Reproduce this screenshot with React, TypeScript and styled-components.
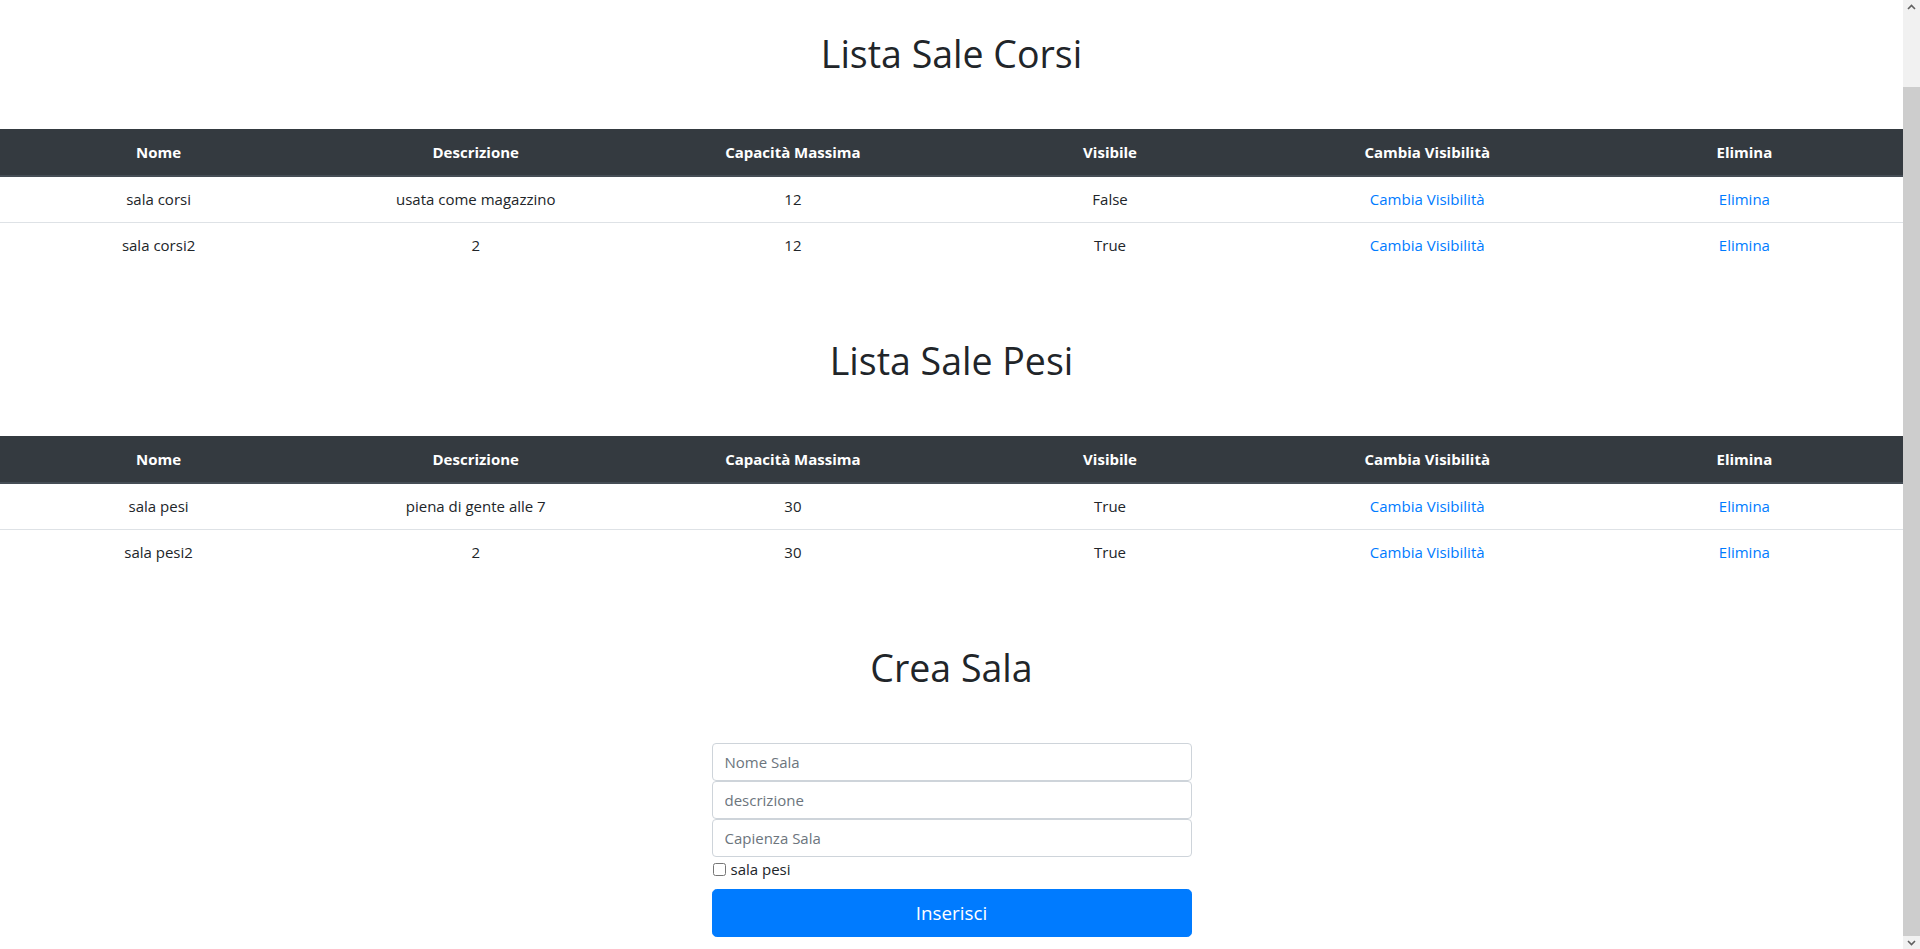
import React from "react";
import styled, { createGlobalStyle } from "styled-components";

const Global = createGlobalStyle`
  *, *::before, *::after { box-sizing: border-box; }
  html, body { margin: 0; padding: 0; background: #fff; overflow: hidden; }
  body {
    font-family: "Open Sans", "Noto Sans", sans-serif;
    font-size: 15px;
    line-height: 24px;
    color: #212529;
  }
`;

const Frame = styled.div`
  display: flex;
  height: 100vh;
  overflow: hidden;
`;

const Content = styled.main`
  flex: 1;
  min-width: 0;
  padding: 29.5px 0 12px;
`;

const Scrollbar = styled.div`
  flex: none;
  width: 17px;
  height: 100%;
  display: flex;
  flex-direction: column;
  background: #f1f1f1;
`;

const ScrollButton = styled.div<{ $h: number }>`
  flex: none;
  height: ${(p) => p.$h}px;
  display: flex;
  align-items: center;
  justify-content: center;
`;

const Track = styled.div`
  flex: 1;
  display: flex;
  flex-direction: column;
  padding-top: 73px;
`;

const Thumb = styled.div`
  flex: 1;
  background: #cdcdcd;
`;

const Section = styled.section`
  & + & {
    margin-top: 68.5px;
  }
`;

const Title = styled.h1`
  margin: 0 0 51.5px;
  font-family: "Open Sans", "Noto Sans", sans-serif;
  font-weight: 400;
  font-size: 37.5px;
  line-height: 48px;
  text-align: center;
  color: #212529;
`;

const Table = styled.table`
  width: 100%;
  table-layout: fixed;
  border-collapse: separate;
  border-spacing: 0;
  color: #212529;
`;

const HeadCell = styled.th`
  background: #343a40;
  color: #fff;
  font-weight: 700;
  font-size: 15px;
  line-height: 24px;
  padding: 11px 12px;
  border-bottom: 2px solid #454d55;
  text-align: center;
  vertical-align: middle;
`;

const Row = styled.tr`
  & + & > td {
    border-top: 1px solid #dee2e6;
  }
`;

const Cell = styled.td`
  padding: 10px 12px 11px;
  line-height: 24px;
  font-size: 15px;
  text-align: center;
  vertical-align: middle;
`;

const Link = styled.a`
  color: #007bff;
  text-decoration: none;
  cursor: pointer;
`;

const Form = styled.form`
  width: 480px;
  margin: 0 auto;
  display: flex;
  flex-direction: column;
`;

const Input = styled.input`
  display: block;
  width: 100%;
  height: 38px;
  margin: 0;
  padding: 6px 12px;
  border: 1px solid #ced4da;
  border-radius: 4px;
  background: #fff;
  font-family: "Open Sans", "Noto Sans", sans-serif;
  font-size: 15px;
  line-height: 24px;
  color: #495057;
  outline: none;
  &::placeholder {
    color: #6c757d;
    opacity: 1;
  }
`;

const CheckRow = styled.label`
  display: flex;
  align-items: center;
  height: 24px;
  margin-bottom: 8px;
  font-size: 15px;
  line-height: 24px;
  color: #212529;
`;

const Check = styled.input`
  width: 13px;
  height: 13px;
  margin: 0 5px 0 1px;
`;

const Button = styled.button`
  display: block;
  width: 100%;
  height: 48px;
  padding: 8px 16px;
  border: 1px solid #007bff;
  border-radius: 4.8px;
  background: #007bff;
  color: #fff;
  font-family: "Open Sans", "Noto Sans", sans-serif;
  font-size: 18.8px;
  line-height: 30px;
  cursor: pointer;
`;

type Sala = { nome: string; descrizione: string; capacita: number; visibile: string };

const corsi: Sala[] = [
  { nome: "sala corsi", descrizione: "usata come magazzino", capacita: 12, visibile: "False" },
  { nome: "sala corsi2", descrizione: "2", capacita: 12, visibile: "True" },
];

const pesi: Sala[] = [
  { nome: "sala pesi", descrizione: "piena di gente alle 7", capacita: 30, visibile: "True" },
  { nome: "sala pesi2", descrizione: "2", capacita: 30, visibile: "True" },
];

const headers = ["Nome", "Descrizione", "Capacità Massima", "Visibile", "Cambia Visibilità", "Elimina"];

function SaleTable({ rows }: { rows: Sala[] }) {
  return (
    <Table>
      <thead>
        <tr>
          {headers.map((h) => (
            <HeadCell key={h}>{h}</HeadCell>
          ))}
        </tr>
      </thead>
      <tbody>
        {rows.map((r) => (
          <Row key={r.nome}>
            <Cell>{r.nome}</Cell>
            <Cell>{r.descrizione}</Cell>
            <Cell>{r.capacita}</Cell>
            <Cell>{r.visibile}</Cell>
            <Cell>
              <Link>Cambia Visibilità</Link>
            </Cell>
            <Cell>
              <Link>Elimina</Link>
            </Cell>
          </Row>
        ))}
      </tbody>
    </Table>
  );
}

function Chevron({ up }: { up: boolean }) {
  return (
    <svg width="9" height="6" viewBox="0 0 9 6" aria-hidden="true">
      <path
        d={up ? "M1 5 L4.5 1.5 L8 5" : "M1 1 L4.5 4.5 L8 1"}
        fill="none"
        stroke="#606060"
        strokeWidth="1.6"
      />
    </svg>
  );
}

export default function App() {
  return (
    <>
      <Global />
      <Frame>
        <Content>
          <Section>
            <Title>Lista Sale Corsi</Title>
            <SaleTable rows={corsi} />
          </Section>
          <Section>
            <Title>Lista Sale Pesi</Title>
            <SaleTable rows={pesi} />
          </Section>
          <Section>
            <Title>Crea Sala</Title>
            <Form onSubmit={(e) => e.preventDefault()}>
              <Input placeholder="Nome Sala" />
              <Input placeholder="descrizione" />
              <Input placeholder="Capienza Sala" />
              <CheckRow>
                <Check type="checkbox" />
                sala pesi
              </CheckRow>
              <Button type="submit">Inserisci</Button>
            </Form>
          </Section>
        </Content>
        <Scrollbar>
          <ScrollButton $h={14}>
            <Chevron up />
          </ScrollButton>
          <Track>
            <Thumb />
          </Track>
          <ScrollButton $h={13}>
            <Chevron up={false} />
          </ScrollButton>
        </Scrollbar>
      </Frame>
    </>
  );
}
